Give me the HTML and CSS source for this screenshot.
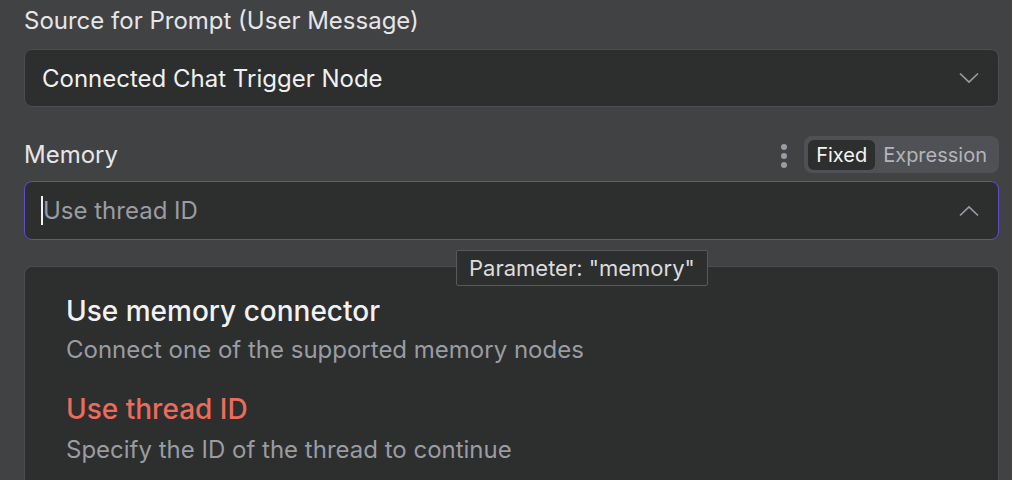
FILE: index.html
```html
<!DOCTYPE html>
<html>
<head>
<meta charset="utf-8">
<link rel="stylesheet" href="styles.css">
</head>
<body>
<div class="panel">
  <div class="label">Source for Prompt (User Message)</div>
  <div class="select">
    <span class="value">Connected Chat Trigger Node</span>
    <svg class="chev" width="20" height="12" viewBox="0 0 20 12"><path d="M1 1.5 L10 10 L19 1.5" fill="none" stroke="#9a9ca3" stroke-width="1.7"/></svg>
  </div>

  <div class="row">
    <div class="label">Memory</div>
    <div class="tools">
      <svg class="dots" width="8" height="26" viewBox="0 0 8 26"><circle cx="4" cy="4" r="3" fill="#9a9ca3"/><circle cx="4" cy="13" r="3" fill="#9a9ca3"/><circle cx="4" cy="22" r="3" fill="#9a9ca3"/></svg>
      <div class="toggle">
        <span class="opt active">Fixed</span>
        <span class="opt">Expression</span>
      </div>
    </div>
  </div>
  <div class="select focus">
    <span class="caret"></span><span class="placeholder">Use thread ID</span>
    <svg class="chev" width="20" height="12" viewBox="0 0 20 12"><path d="M1 10.5 L10 2 L19 10.5" fill="none" stroke="#9a9ca3" stroke-width="1.7"/></svg>
  </div>

  <div class="dropdown">
    <div class="item">
      <div class="title">Use memory connector</div>
      <div class="desc">Connect one of the supported memory nodes</div>
    </div>
    <div class="item">
      <div class="title selected">Use thread ID</div>
      <div class="desc">Specify the ID of the thread to continue</div>
    </div>
  </div>

  <div class="tooltip">Parameter: "memory"</div>
</div>
</body>
</html>
```
FILE: styles.css
```css
html, body {
  margin: 0;
  padding: 0;
  background: #414244;
  height: 480px;
  overflow: hidden;
  font-family: Inter, "Noto Sans", sans-serif;
}
.panel {
  position: relative;
  padding: 6px 13px 0 24px;
}
.label {
  font-size: 24px;
  line-height: 30px;
  color: #e6e6e8;
}
.select {
  margin-top: 13px;
  height: 58px;
  box-sizing: border-box;
  border: 1px solid #4c4d50;
  border-radius: 8px;
  background: #2d2e2e;
  display: flex;
  align-items: center;
  padding: 0 19px 0 17px;
}
.value {
  flex: 1;
  font-size: 24px;
  color: #f0f0f2;
}
.chev { display: block; }
.row {
  margin-top: 29px;
  height: 37px;
  display: flex;
  align-items: center;
  justify-content: space-between;
}
.row .label { line-height: 37px; }
.tools {
  display: flex;
  align-items: center;
  gap: 16px;
}
.dots { display: block; margin-top: 3px; }
.toggle {
  display: flex;
  align-items: center;
  height: 37px;
  box-sizing: border-box;
  padding: 4px;
  background: #505154;
  border-radius: 8px;
}
.opt {
  font-size: 20px;
  line-height: 29px;
  padding: 1px 8px 0;
  color: #b3b5bb;
  border-radius: 6px;
}
.opt.active {
  background: #2d2e2e;
  color: #f4f4f5;
}
.select.focus {
  margin-top: 8px;
  height: 59px;
  border: 1.5px solid #5c4fc7;
  padding-left: 16px;
}
.caret {
  width: 2px;
  height: 29px;
  background: #f2f2f2;
}
.placeholder {
  flex: 1;
  font-size: 24px;
  color: #9a9ca3;
}
.dropdown {
  margin-top: 26px;
  height: 215px;
  box-sizing: border-box;
  border: 1px solid #4b4c4f;
  border-bottom: 0;
  border-radius: 8px 8px 0 0;
  background: #2d2e2e;
  padding: 27px 41px 0;
  overflow: hidden;
}
.item + .item { margin-top: 27px; }
.title {
  font-size: 28px;
  line-height: 34px;
  font-weight: 500;
  color: #f2f2f4;
}
.title.selected { color: #ea6c5c; }
.desc {
  margin-top: 7px;
  font-size: 24px;
  line-height: 30px;
  color: #9a9ca3;
}
.item + .item .desc { margin-top: 9px; }
.tooltip {
  position: absolute;
  left: 456px;
  top: 250px;
  width: 252px;
  height: 36px;
  box-sizing: border-box;
  border: 1px solid #58595c;
  border-radius: 2px;
  background: #2d2e2e;
  color: #dcdcde;
  font-size: 22px;
  line-height: 34px;
  padding-left: 12px;
  white-space: nowrap;
}
```
